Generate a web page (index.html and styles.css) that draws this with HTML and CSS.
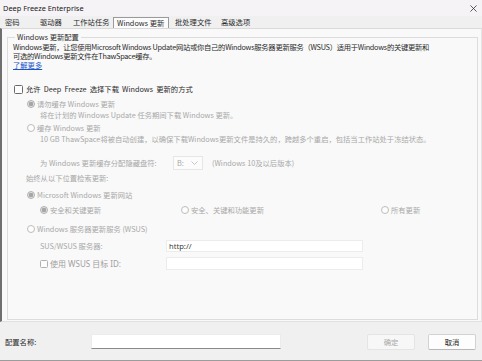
FILE: index.html
```html
<!DOCTYPE html>
<html lang="zh-CN">
<head>
    <meta charset="UTF-8">
    <title>Deep Freeze Enterprise</title>
    <link rel="stylesheet" href="styles.css">
</head>
<body>
    <div class="window">
        <div class="titlebar">
            <span class="title">Deep Freeze Enterprise</span>
            <svg class="close" width="8" height="8" viewBox="0 0 8 8">
                <path d="M0.5 0.5 L7.5 7.5 M7.5 0.5 L0.5 7.5" stroke="#333" stroke-width="0.9" fill="none"/>
            </svg>
        </div>

        <div class="tabs">
            <span class="tab">密码</span>
            <span class="tab">驱动器</span>
            <span class="tab">工作站任务</span>
            <span class="tab active">Windows 更新</span>
            <span class="tab">批处理文件</span>
            <span class="tab">高级选项</span>
        </div>

        <div class="panel">
            <fieldset class="group">
                <legend>Windows 更新配置</legend>

                <p class="desc">Windows更新，让您使用Microsoft Windows Update网站或你自己的Windows服务器更新服务（WSUS）适用于Windows的关键更新和<br>可选的Windows更新文件在ThawSpace缓存。</p>
                <a class="more" href="#">了解更多</a>

                <div class="row allow"><span class="box"></span>允许 Deep Freeze 选择下载 Windows 更新的方式</div>

                <div class="row opt r1"><span class="radio on"></span>请勿缓存 Windows 更新</div>
                <div class="hint">将在计划的 Windows Update 任务期间下载 Windows 更新。</div>

                <div class="row opt r2"><span class="radio"></span>缓存 Windows 更新</div>
                <div class="hint">10 GB ThawSpace将被自动创建，以确保下载Windows更新文件是持久的，跨越多个重启，包括当工作站处于冻结状态。</div>

                <div class="drive-row">
                    <span class="drive-label">为 Windows 更新缓存分配隐藏盘符:</span>
                    <span class="select">B:
                        <svg class="chev" width="7" height="4" viewBox="0 0 7 4">
                            <path d="M0.5 0.5 L3.5 3.5 L6.5 0.5" stroke="#b8b8b8" stroke-width="0.8" fill="none"/>
                        </svg>
                    </span>
                    <span class="drive-note">(Windows 10及以后版本)</span>
                </div>

                <div class="always">始终从以下位置检索更新:</div>

                <div class="row opt r3"><span class="radio on"></span>Microsoft Windows 更新网站</div>

                <div class="sub-opts">
                    <div class="row"><span class="radio on"></span>安全和关键更新</div>
                    <div class="row"><span class="radio"></span>安全、关键和功能更新</div>
                    <div class="row"><span class="radio"></span>所有更新</div>
                </div>

                <div class="row opt r4"><span class="radio"></span>Windows 服务器更新服务 (WSUS)</div>

                <div class="field-row sus">
                    <span class="field-label">SUS/WSUS 服务器:</span>
                    <span class="input">http://</span>
                </div>
                <div class="field-row target">
                    <span class="field-label ui"><span class="box"></span>使用 WSUS 目标 ID:</span>
                    <span class="input"></span>
                </div>
            </fieldset>
        </div>

        <div class="footer">
            <span class="name-label">配置名称:</span>
            <span class="name-input"></span>
            <span class="btn disabled">确定</span>
            <span class="btn">取消</span>
        </div>
    </div>
</body>
</html>
```

FILE: styles.css
```css
*{
    box-sizing: border-box;
}
body{
    margin: 0;
    background: #f0f0f0;
    font-family: "Noto Sans CJK SC", sans-serif;
    font-size: 7.3px;
    color: #2a2a2a;
}
.window{
    width: 482px;
    height: 361px;
    display: flex;
    flex-direction: column;
    overflow: hidden;
}
.titlebar{
    height: 16px;
    display: flex;
    align-items: center;
    justify-content: space-between;
    padding: 0 5px 0 3px;
    background: #f6f3f6;
}
.title{
    font-family: "Noto Sans", sans-serif;
    font-size: 7.4px;
    color: #1b1b1b;
}
.close{
    display: block;
    width: 7px;
    height: 7px;
}
.tabs{
    height: 12px;
    display: flex;
    align-items: stretch;
    padding-left: 2px;
    background: #f0f0f0;
}
.tab{
    display: flex;
    align-items: center;
    padding-left: 3px;
    color: #2a2a2a;
    white-space: nowrap;
}
.tab:nth-child(1){ width: 35px; }
.tab:nth-child(2){ width: 33px; }
.tab:nth-child(3){ width: 43px; }
.tab:nth-child(4){ width: 56px; }
.tab:nth-child(5){ width: 46px; }
.tab.active{
    margin-top: 1px;
    margin-right: 3px;
    width: 56px;
    background: #fbfbfb;
    border: 1px solid #9a9a9a;
    border-bottom: none;
}
.panel{
    height: 294px;
    background: #f9f9f9;
    border-top: 1px solid #dadada;
    border-left: 2px solid #6f6f6f;
    border-right: 1px solid #e4e4e4;
    border-bottom: 1px solid #e0e0e0;
    padding: 4px 3px 0 5px;
}
.group{
    margin: 0;
    height: 287px;
    padding: 0 5px;
    border: 1px solid #dcdcdc;
}
.group legend{
    padding: 0 2px;
    margin-left: 2px;
    line-height: 9px;
    color: #2a2a2a;
}
.desc{
    margin: 1px 0 0;
    line-height: 9px;
    letter-spacing: -0.27px;
    white-space: nowrap;
}
.more{
    display: block;
    width: max-content;
    line-height: 9px;
    color: #1a55c8;
    text-decoration: underline;
}
.row{
    height: 12px;
    display: flex;
    align-items: center;
    white-space: nowrap;
}
.box{
    width: 9px;
    height: 9px;
    border: 1px solid #6a6a6a;
    border-radius: 1.5px;
    background: #fdfdfd;
    margin-right: 3px;
    flex: none;
}
.allow{
    margin-top: 13px;
    margin-left: 1px;
    word-spacing: 1.5px;
}
.opt{
    margin-left: 14px;
    color: #a8a8a8;
}
.radio{
    width: 8px;
    height: 8px;
    border: 1px solid #bcbcbc;
    border-radius: 50%;
    background: #fdfdfd;
    margin-right: 2px;
    flex: none;
}
.radio.on{
    border-color: #b0b0b0;
    background: radial-gradient(circle, #a6a6a6 0 2px, #e2e2e2 2.5px);
}
.r1{ margin-top: 3px; }
.r2{ margin-top: 2px; }
.r3{ margin-top: 6px; }
.r4{ margin-top: 7px; }
.hint{
    margin-left: 27px;
    line-height: 10px;
    color: #a8a8a8;
    white-space: nowrap;
}
.drive-row{
    margin-top: 12px;
    margin-left: 27px;
    height: 14px;
    display: flex;
    align-items: center;
    color: #a8a8a8;
    white-space: nowrap;
}
.drive-label{
    width: 133px;
}
.select{
    width: 30px;
    height: 14px;
    display: flex;
    align-items: center;
    justify-content: space-between;
    padding: 0 4px 0 3px;
    border: 1px solid #e6e6e6;
    background: #fcfcfc;
    color: #a8a8a8;
}
.chev{
    display: block;
}
.drive-note{
    margin-left: 9px;
}
.always{
    margin-top: 3px;
    margin-left: 13px;
    line-height: 10px;
    color: #a8a8a8;
}
.sub-opts{
    margin-top: 3px;
    margin-left: 27px;
    display: grid;
    grid-template-columns: 141px 200px 1fr;
    color: #a8a8a8;
}
.field-row{
    margin-top: 5px;
    margin-left: 27px;
    height: 12px;
    display: flex;
    align-items: center;
    color: #a8a8a8;
}
.target{
    height: 13px;
}
.field-label{
    width: 126px;
    display: flex;
    align-items: center;
    white-space: nowrap;
}
.field-label.ui{
    font-family: "Noto Sans", "Noto Sans CJK SC", sans-serif;
    font-size: 8px;
    color: #a0a0a0;
}
.field-label .box{
    width: 8px;
    height: 8px;
    border-color: #b0b0b0;
    margin-right: 2px;
}
.input{
    width: 197px;
    height: 100%;
    display: flex;
    align-items: center;
    padding-left: 2px;
    background: #ffffff;
    border: 1px solid #ececec;
    font-family: "Noto Sans", sans-serif;
    font-size: 7.6px;
    color: #3a3a3a;
}
.footer{
    flex: 1;
    display: flex;
    align-items: center;
    padding: 1px 6px 0 5px;
    border-bottom: 1px solid #9c9c9c;
}
.name-label{
    width: 86px;
    color: #2a2a2a;
}
.name-input{
    width: 190px;
    height: 15px;
    background: #ffffff;
    border: 1px solid #ececec;
    border-bottom: 1px solid #8a8a8a;
}
.btn{
    width: 48px;
    height: 16px;
    display: flex;
    align-items: center;
    justify-content: center;
    margin-left: 13px;
    background: #fdfdfd;
    border: 1px solid #d2d2d2;
    border-bottom-color: #b8b8b8;
    border-radius: 2px;
    color: #222;
}
.btn.disabled{
    margin-left: auto;
    background: #f7f7f7;
    border-color: #e4e4e4;
    color: #a8a8a8;
}
```
